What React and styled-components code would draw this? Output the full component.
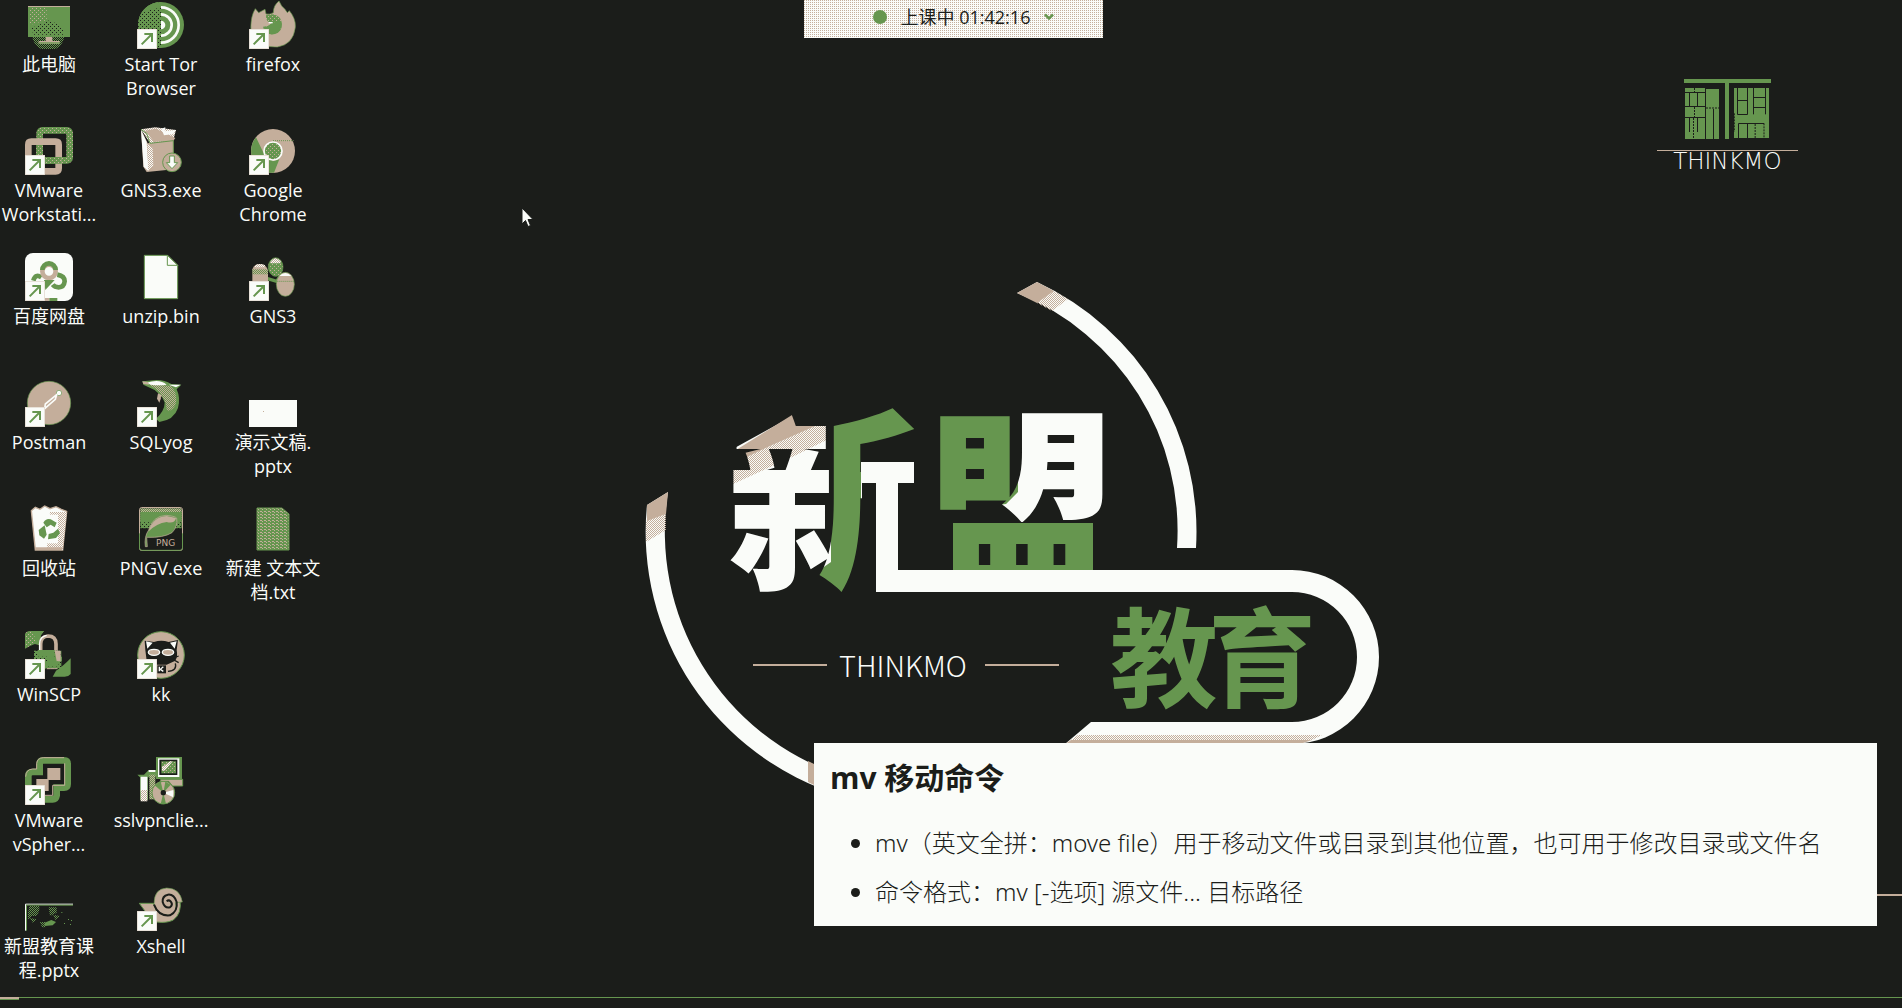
import React from "react";
import styled, { createGlobalStyle } from "styled-components";

const C = {
  ink: "#1b1d1a",
  green: "#66964f",
  tan: "#c4ae9b",
  paper: "#fafcf9",
};

const ui = `"Open Sans", "Noto Sans CJK SC", sans-serif`;
const prose = `"Noto Sans", "Noto Sans CJK SC", sans-serif`;

const GlobalStyle = createGlobalStyle`
  *, *::before, *::after { box-sizing: border-box; }
  body { margin: 0; background: ${C.ink}; color: ${C.paper}; font-family: ${ui}; }
`;

const Desktop = styled.main`
  position: relative;
  height: 100vh;
  min-height: 640px;
  overflow: hidden;
  background: ${C.ink};
`;

const IconGrid = styled.nav`
  position: relative;
  display: grid;
  height: 100%;
  width: max-content;
  grid-auto-flow: column;
  grid-template-rows: repeat(auto-fill, 126px);
  grid-auto-columns: 98px;
  column-gap: 14px;
`;

const Shortcut = styled.button`
  display: flex;
  flex-direction: column;
  align-items: center;
  gap: 3px;
  padding: 1px 0 0;
  border: 0;
  background: none;
  color: ${C.paper};
  font-family: ${ui};
  font-size: 18px;
  line-height: 24px;
  cursor: default;
`;

const Label = styled.span`
  white-space: pre;
  text-align: center;
`;

const Glyph = styled.svg`
  display: block;
  flex: none;
  width: 48px;
  height: 48px;
`;

const Emblem = styled.svg`
  position: absolute;
  left: calc(50% - 311px);
  top: calc(50% - 234px);
  width: 752px;
  height: 540px;
`;

const Brand = styled.svg`
  position: absolute;
  right: 82px;
  top: 60px;
  width: 180px;
  height: 120px;
`;

const StatusBar = styled.button`
  position: absolute;
  top: 0;
  left: calc(50% - 147px);
  display: flex;
  align-items: center;
  justify-content: center;
  gap: 14px;
  width: 299px;
  height: 38px;
  padding: 0 0 4px 20px;
  border: 0;
  color: ${C.ink};
  background: conic-gradient(${C.paper} 0 75%, ${C.tan} 75% 100%) 0 0 / 2px 2px;
  font-family: ${ui};
  font-size: 18px;
  line-height: 24px;
`;

const Dot = styled.span`
  width: 14px;
  height: 14px;
  border-radius: 50%;
  background: ${C.green};
`;

const Note = styled.article`
  position: absolute;
  right: 25px;
  bottom: 82px;
  width: 1063px;
  max-width: calc(100% - 50px);
  padding: 15px 16px 10px;
  background: ${C.paper};
  color: ${C.ink};
`;

const NoteTitle = styled.h2`
  margin: 0;
  font-size: 30px;
  line-height: 40px;
  font-weight: 700;
`;

const NoteList = styled.ul`
  margin: 20px 0 0;
  padding-left: 45px;
  font-family: ${prose};
  font-size: 24px;
  line-height: 49px;
  font-weight: 300;
`;

const WallLine = styled.span`
  position: absolute;
  right: 0;
  bottom: 112px;
  width: 60px;
  height: 2px;
  background: ${C.tan};
`;

const Progress = styled.div`
  position: absolute;
  left: 0;
  right: 0;
  bottom: 8px;
  height: 3px;
  border-top: 1px solid ${C.green};
`;

const ProgressFill = styled.div`
  width: 1%;
  height: 3px;
  margin-top: -1px;
  border-bottom: 1px solid ${C.green};
  background: ${C.tan};
`;

const Pointer = styled.svg`
  position: absolute;
  left: 521px;
  top: 207px;
  width: 13px;
  height: 21px;
`;

const TileSheet = styled.svg`
  position: absolute;
  width: 0;
  height: 0;
`;

/* Shared dither tiles, 3 units to a screen pixel. */
const Tiles = () => (
  <TileSheet aria-hidden="true">
    <defs>
      <pattern id="tanOnGreen" width="12" height="12" patternUnits="userSpaceOnUse">
        <rect width="12" height="12" fill={C.green} />
        <path d="M0 0h3v3h-3zM6 6h3v3h-3z" fill={C.tan} />
      </pattern>
      <pattern id="inkOnGreen" width="12" height="12" patternUnits="userSpaceOnUse">
        <rect width="12" height="12" fill={C.green} />
        <path d="M0 0h3v3h-3zM6 6h3v3h-3z" fill={C.ink} />
      </pattern>
      <pattern id="greenInk" width="6" height="6" patternUnits="userSpaceOnUse">
        <path d="M0 0h3v3h-3zM3 3h3v3h-3z" fill={C.green} />
      </pattern>
      <pattern id="tanGreen" width="6" height="6" patternUnits="userSpaceOnUse">
        <rect width="6" height="6" fill={C.green} />
        <path d="M0 0h3v3h-3zM3 3h3v3h-3z" fill={C.tan} />
      </pattern>
      <pattern id="tanPaper" width="6" height="6" patternUnits="userSpaceOnUse">
        <rect width="6" height="6" fill={C.paper} />
        <path d="M0 0h3v3h-3zM3 3h3v3h-3z" fill={C.tan} />
      </pattern>
      <pattern id="textLines" width="12" height="9" patternUnits="userSpaceOnUse">
        <rect width="12" height="9" fill={C.green} />
        <path d="M0 0h6v3h-6zM6 3h3v3h-3z" fill={C.tan} />
      </pattern>
    </defs>
  </TileSheet>
);

const Badge = ({ x, y }) => (
  <g transform={`translate(${x} ${y + 84})`}>
    <rect width="60" height="60" fill={C.tan} />
    <rect x="2" y="2" width="56" height="56" fill={C.paper} />
    <path d="M1.500 1.500h57v57h-57z" fill="none" stroke={C.paper} strokeWidth="3" strokeDasharray="3 3" />
    <path d="M14 46L42 18M22 15h23v24" fill="none" stroke={C.green} strokeWidth="6" />
  </g>
);

const art = {
  pc: (
    <>
      <circle cx="145" cy="104" r="48" fill="url(#greenInk)" />
      <rect x="84" y="18" width="126" height="93" fill={C.green} />
      <path d="M87 24H140V60L87 76z" fill="url(#tanOnGreen)" />
      <path d="M95 84L150 60 190 84v20H100z" fill="url(#inkOnGreen)" />
      <path d="M84 19.500h126" stroke={C.tan} strokeWidth="3" />
      <path d="M137 111h20v12h22v9h-63v-9h21z" fill={C.tan} />
      <path d="M117 129h63" stroke={C.green} strokeWidth="4" />
    </>
  ),
  tor: (
    <>
      <circle cx="483" cy="75" r="69" fill={C.green} />
      <path d="M483 6a69 69 0 0 0 0 138z" fill="url(#inkOnGreen)" />
      <path d="M420 46Q440 8 483 6v18Q440 26 420 46z" fill={C.green} />
      <g fill="none" stroke={C.paper} strokeWidth="8">
        <path d="M483 22a53 53 0 0 1 0 106M483 43a32 32 0 0 1 0 64" />
      </g>
      <path d="M483 62a13 13 0 0 1 0 26z" fill={C.paper} />
    </>
  ),
  firefox: (
    <>
      <path d="M753 98Q750 50 766 26L776 38 795 28 798 42Q810 44 820 38 820 16 837 3 844 20 855 28L862 38 868 32Q888 56 886 82 880 134 832 141 770 144 753 98z" fill={C.tan} stroke={C.green} strokeWidth="2" />
      <path d="M798 46Q824 36 840 54 852 74 840 92 822 108 802 100 790 92 790 80 802 82 816 70 796 66 798 46z" fill="url(#tanOnGreen)" />
      <path d="M790 80Q806 82 816 68L842 62Q850 82 834 98 812 110 796 94z" fill={C.green} />
      <path d="M806 66h12v4h-12z" fill={C.paper} />
    </>
  ),
  vmware: (
    <>
      <rect x="119" y="391" width="90" height="90" rx="8" fill="none" stroke="url(#tanOnGreen)" strokeWidth="20" />
      <path d="M85 434q0-9 9-9h73q9 0 9 9v71q0 9-9 9H94q-9 0-9-9z" fill="none" stroke={C.tan} strokeWidth="20" />
      <path d="M119 436v45h66" fill="none" stroke="url(#tanOnGreen)" strokeWidth="20" />
      <path d="M162 438v28h-28" fill="none" stroke={C.ink} strokeWidth="2" />
    </>
  ),
  gnsexe: (
    <>
      <path d="M423 388L443 430 520 420 522 508 440 516 430 500z" fill={C.tan} />
      <path d="M423 390L440 426 446 514 431 500z" fill={C.paper} />
      <path d="M423 388L466 382 528 390 520 420 450 430z" fill="url(#tanPaper)" />
      <path d="M436 392L468 386 526 414 520 422 462 426z" fill={C.tan} />
      <path d="M484 386l12-4-2 12 34-4-8 12-28 4z" fill={C.paper} />
      <path d="M442 432L458 444 460 498 444 512z" fill="url(#tanPaper)" />
      <path d="M423 388L440 400 450 430 520 422v40" fill="none" stroke={C.green} strokeWidth="3" />
      <circle cx="516" cy="487" r="28" fill={C.tan} stroke={C.green} strokeWidth="3" />
      <path d="M509 468h14v20h10l-17 18-17-18h10z" fill={C.paper} stroke={C.green} strokeWidth="3" />
    </>
  ),
  chrome: (
    <>
      <circle cx="819" cy="453" r="66" fill={C.tan} />
      <path d="M768 412A66 66 0 0 0 806 518L819 482 794 466z" fill={C.green} />
      <path d="M810 486L838 478 822 518H806z" fill={C.green} />
      <path d="M819 422h62" stroke={C.green} strokeWidth="3" strokeDasharray="3 3" />
      <circle cx="819" cy="453" r="27" fill="url(#tanOnGreen)" stroke={C.paper} strokeWidth="5" />
    </>
  ),
  baidu: (
    <>
      <rect x="75" y="39" width="144" height="144" rx="24" fill={C.paper} />
      <g fill="none" strokeWidth="14">
        <path d="M124 112Q106 100 100 122" stroke={C.green} />
        <circle cx="147" cy="94" r="20" stroke={C.tan} />
        <path d="M127 90a20 20 0 0 1 40 0" stroke={C.green} />
        <path d="M172 104Q194 108 194 124 192 142 176 142 164 142 158 134" stroke={C.green} />
      </g>
      <path d="M132 120h32l-28 30z" fill={C.green} />
      <path d="M130 174h18v9h-18z" fill={C.tan} />
      <path d="M148 174h24v9h-24z" fill={C.green} />
    </>
  ),
  file: (
    <g fill={C.paper} stroke={C.green} strokeWidth="3">
      <path d="M433 46h70l30 30v100H433z" />
      <path d="M502 46v30h31z" />
    </g>
  ),
  gns: (
    <>
      <path d="M790 112L830 124 846 100" fill="none" stroke={C.green} strokeWidth="10" />
      <path d="M757 88Q762 72 781 72 800 74 804 92V124H757z" fill={C.tan} />
      <path d="M757 88h47v15h-47z" fill="url(#greenInk)" />
      <path d="M765 76q16-8 30 0v6h-30z" fill="url(#tanPaper)" />
      <ellipse cx="827" cy="81" rx="22" ry="28" fill="url(#tanOnGreen)" stroke={C.green} strokeWidth="2" />
      <path d="M812 64q14-18 30 0v6h-30z" fill="url(#tanPaper)" />
      <ellipse cx="856" cy="133" rx="27" ry="36" fill={C.tan} stroke={C.green} strokeWidth="2" />
      <path d="M838 108q18-18 36 0z" fill={C.paper} />
      <path d="M830 124h52" stroke={C.green} strokeWidth="3" strokeDasharray="3 3" />
    </>
  ),
  postman: (
    <>
      <circle cx="147" cy="489" r="65" fill={C.tan} stroke={C.green} strokeWidth="2" />
      <circle cx="177" cy="459" r="8" fill={C.paper} stroke={C.green} strokeWidth="2" />
      <path d="M170 464L136 492 134 506 166 478z" fill={C.tan} stroke={C.paper} strokeWidth="5" />
      <path d="M136 504l-10 10" stroke={C.paper} strokeWidth="4" />
    </>
  ),
  dolphin: (
    <>
      <path d="M427 424L470 420Q494 420 514 432L544 434 530 448Q542 474 534 504 522 540 478 546L468 536Q494 512 494 488 488 470 464 450L430 434z" fill={C.green} />
      <path d="M446 432L512 438Q536 460 526 496 510 520 500 508 500 474 466 446z" fill="url(#tanGreen)" />
      <path d="M440 428Q480 416 500 434 480 438 452 434zM506 434l36 0-14 8z" fill={C.paper} />
      <path d="M427 424l16 2 4 8-17-2z" fill={C.tan} />
      <path d="M474 460l12 6-8 22-7-12z" fill={C.tan} />
      <path d="M484 470q10 24-6 40" fill="none" stroke={C.ink} strokeWidth="4" />
    </>
  ),
  slide: (
    <>
      <rect x="747" y="480" width="144" height="81" fill={C.paper} />
      <rect x="789" y="513" width="3" height="3" fill={C.tan} />
    </>
  ),
  bin: (
    <>
      <path d="M94 62L106 52 120 58 134 48 150 56 168 50 184 58 200 64 188 180H106z" fill={C.paper} stroke={C.tan} strokeWidth="4" />
      <path d="M150 66L200 66 188 180H140z" fill="url(#tanPaper)" />
      <path d="M134 74h40v86h-40z" fill={C.paper} />
      <path d="M106 172h82l-2 8h-78z" fill={C.tan} />
      <g fill={C.green}>
        <path d="M130 98Q138 84 152 88L170 98 164 112 152 104 140 112z" />
        <path d="M134 106L140 134 132 146 118 136 116 120z" />
        <path d="M174 116l6 14-12 14-24 4 2-16 14-4z" />
      </g>
    </>
  ),
  png: (
    <>
      <rect x="418.500" y="52.500" width="129" height="129" rx="7" fill={C.ink} stroke={C.tan} strokeWidth="3" />
      <path d="M421 55h124v42H421z" fill="url(#tanGreen)" />
      <path d="M421 66h124v34H421z" fill={C.green} />
      <path d="M421 97h124v18H421z" fill="url(#inkOnGreen)" />
      <path d="M436 170Q432 140 446 120 458 78 498 76 524 78 530 84 534 110 516 128 490 144 440 142L442 170z" fill={C.green} stroke={C.tan} strokeWidth="2" />
      <path d="M446 124Q458 80 500 78L528 84Q524 102 500 96 470 100 446 124z" fill={C.tan} />
      <path d="M418.500 130v44q0 7 7 7h115q7 0 7-7v-44" fill="none" stroke={C.green} strokeWidth="3" />
      <text x="468" y="167" fontSize="27" fontFamily="DejaVu Sans, sans-serif" fill={C.tan}>PNG</text>
    </>
  ),
  txt: (
    <path d="M771 54h75l21 18v108h-96z" fill="url(#textLines)" stroke={C.green} strokeWidth="3" />
  ),
  winscp: (
    <>
      <path d="M75 432Q78 424 90 423H132L122 436V466L104 462 90 468 75 476z" fill="url(#tanOnGreen)" />
      <path d="M100 423h32l-10 14v28l-14-3z" fill={C.green} />
      <path d="M122 484V462Q122 440 144 438 168 438 168 462V500" fill="none" stroke={C.tan} strokeWidth="11" />
      <path d="M119 480V460Q120 440 140 436" fill="none" stroke={C.paper} strokeWidth="4" />
      <path d="M102 482h82v54h-82z" fill="url(#inkOnGreen)" />
      <path d="M114 480h50v20h-50zM144 500h42v14h-42z" fill={C.green} />
      <path d="M164 482h18v32h-12z" fill={C.tan} />
      <path d="M136 514h40v16h-40z" fill="url(#greenInk)" />
      <path d="M140 536h32" stroke={C.tan} strokeWidth="3" />
      <path d="M212 505L212 552Q206 560 194 560H158L168 542Q188 530 212 505z" fill={C.green} />
    </>
  ),
  kk: (
    <>
      <circle cx="483" cy="495" r="70" fill={C.tan} stroke={C.green} strokeWidth="3" />
      <path d="M434 452L462 456Q484 448 506 456L534 450 530 480Q534 500 526 512L500 524H462L440 512 436 480z" fill={C.ink} />
      <path d="M438 454l20 4-16 18zM530 454l-20 4 14 18z" fill={C.paper} />
      <ellipse cx="462" cy="487" rx="17" ry="9" fill={C.tan} stroke={C.paper} strokeWidth="4" />
      <ellipse cx="504" cy="487" rx="17" ry="9" fill={C.tan} stroke={C.paper} strokeWidth="4" />
      <path d="M520 504l16-6M522 510l14 8M526 520q6 22-22 24" fill="none" stroke={C.ink} strokeWidth="4" />
      <path d="M472 526h26v24h-26z" fill={C.ink} />
      <path d="M478 530v14M490 530l-9 8 9 6" fill="none" stroke={C.paper} strokeWidth="4" />
    </>
  ),
  vsphere: (
    <>
      <path d="M119 96V72Q119 61 130 61H192Q203 61 203 72V132Q203 143 192 143H170V166Q168 178 158 178H96Q85 178 85 168V108Q85 96 98 96z" fill={C.ink} stroke={C.green} strokeWidth="20" />
      <path d="M77 110Q78 88 98 87H110V70Q112 54 130 53H192M194 70V136H158V166H134" fill="none" stroke={C.tan} strokeWidth="3" />
      <path d="M142 84h39v36h-39zM109 117h37v36h-37z" fill={C.tan} />
    </>
  ),
  setup: (
    <>
      <path d="M412 104L432 104 446 90H468V110L444 112V180H420V112z" fill={C.green} />
      <path d="M422 110h20v44h-20zM446 90h20v6h-20z" fill={C.paper} />
      <path d="M422 150h20v34h-20z" fill="url(#tanPaper)" />
      <path d="M448 104h18v74h-18z" fill="url(#tanGreen)" />
      <circle cx="490" cy="158" r="34" fill={C.tan} stroke={C.green} strokeWidth="3" />
      <path d="M490 158L464 136 482 124zM490 158l-8 35 16-2zM490 158l22-24-16-9z" fill={C.green} />
      <path d="M490 158l30-8v22z" fill={C.paper} />
      <circle cx="490" cy="158" r="8" fill={C.ink} />
      <path d="M468 51h78v66h-78z" fill={C.green} />
      <path d="M474 55h64v56h-64z" fill={C.paper} />
      <path d="M478 59h54v46h-54z" fill={C.ink} />
      <path d="M484 64h44v36h-44z" fill="url(#tanOnGreen)" />
      <path d="M486 82l24-18h8l-24 28h-8z" fill="url(#tanPaper)" />
      <path d="M482 118h66v20h-30l-12-14h-24z" fill={C.tan} stroke={C.green} strokeWidth="3" />
    </>
  ),
  course: (
    <>
      <path d="M76.500 572V492.500H219" fill="none" stroke={C.paper} strokeWidth="3" />
      <path d="M79.500 572V495.500H219" fill="none" stroke={C.green} strokeWidth="3" />
      <path d="M88 498h30v14l-8 16h-14l-12 10v-20z" fill="url(#greenInk)" />
      <path d="M146 502h24v16l-20 10zM90 534l20 4-12 10zM120 546h16v16h-10zM160 524l20 4-14 12z" fill="url(#greenInk)" />
      <path d="M134 548l20-8 14 6-10 10-24 2z" fill={C.green} />
      <path d="M184 516h3v3h-3zM204 537h3v3h-3zM213 540h3v3h-3zM192 549h3v3h-3zM210 552h3v3h-3z" fill={C.green} />
    </>
  ),
  xshell: (
    <>
      <path d="M418 490H460L470 514 540 480Q546 520 520 540 500 550 470 546L440 520z" fill={C.tan} stroke={C.green} strokeWidth="3" />
      <path d="M462 492Q462 446 500 444 540 444 547 486L526 488Q536 520 506 526 470 524 462 492z" fill={C.tan} stroke={C.green} strokeWidth="2" />
      <path d="M462 494Q476 530 510 526 534 514 530 486 522 462 504 464 486 468 488 486 494 506 510 502 520 494 512 484 506 478 500 484" fill="none" stroke={C.ink} strokeWidth="6" />
    </>
  ),
};

const COL = [75, 411, 747];
const ROW = [3, 381, 39, 417, 45, 423, 51, 429];

const shortcuts = [
  ["pc", "此电脑", 0, 0, false],
  ["vmware", "VMware\nWorkstati...", 0, 1, true],
  ["baidu", "百度网盘", 0, 2, true],
  ["postman", "Postman", 0, 3, true],
  ["bin", "回收站", 0, 4, false],
  ["winscp", "WinSCP", 0, 5, true],
  ["vsphere", "VMware\nvSpher...", 0, 6, true],
  ["course", "新盟教育课\n程.pptx", 0, 7, false],
  ["tor", "Start Tor\nBrowser", 1, 0, true],
  ["gnsexe", "GNS3.exe", 1, 1, false],
  ["file", "unzip.bin", 1, 2, false],
  ["dolphin", "SQLyog", 1, 3, true],
  ["png", "PNGV.exe", 1, 4, false],
  ["kk", "kk", 1, 5, true],
  ["setup", "sslvpnclie...", 1, 6, false],
  ["xshell", "Xshell", 1, 7, true],
  ["firefox", "firefox", 2, 0, true],
  ["chrome", "Google\nChrome", 2, 1, true],
  ["gns", "GNS3", 2, 2, true],
  ["slide", "演示文稿.\npptx", 2, 3, false],
  ["txt", "新建 文本文\n档.txt", 2, 4, false],
];

const DesktopIcon = ({ item: [name, label, col, row, linked] }) => (
  <Shortcut type="button">
    <Glyph viewBox={`${COL[col]} ${ROW[row]} 144 144`} aria-hidden="true">
      {art[name]}
      {linked && <Badge x={COL[col]} y={ROW[row]} />}
    </Glyph>
    <Label>{label}</Label>
  </Shortcut>
);

const WallpaperEmblem = () => (
  <Emblem viewBox="640 270 752 540">
    <defs>
      <pattern id="speckle" width="2" height="2" patternUnits="userSpaceOnUse">
        <path d="M0 0h1v1h-1zM1 1h1v1h-1z" fill={C.tan} />
      </pattern>
      <pattern id="nameTint" x="640" y="270" width="752" height="540" patternUnits="userSpaceOnUse">
        <path d="M80 330V186L160 142H222V330z" fill={C.paper} />
        <path d="M220 192H274V213H258V322H236V213H220z" fill={C.paper} />
        <path d="M80 190L160 140H180V154L130 176 80 200z" fill={C.tan} />
        <path d="M80 220V200L130 176 180 154 215 140V156L150 188z" fill="url(#speckle)" />
        <path d="M191 130H280V191H221V330H168V308L191 292z" fill={C.green} />
        <path d="M300 130H470V252H300z" fill={C.paper} />
        <path d="M300 130H378V222L366 234 350 236V242H300z" fill={C.green} />
        <path d="M313 253H453V301H313z" fill={C.green} />
      </pattern>
    </defs>
    <path d="M1017 293L1037 282A275 275 0 0 1 1196 548H1177A256 256 0 0 0 1017 293z" fill={C.paper} />
    <path d="M1017 293L1037 282 1054 291 1037 303z" fill={C.tan} />
    <path d="M1054 291L1068 299 1052 311 1037 303z" fill="url(#speckle)" />
    <path d="M668 492L647 505A275 275 0 0 0 840 795V775A256 256 0 0 1 668 492z" fill={C.paper} />
    <path d="M668 492L647 505V521L666 514z" fill={C.tan} />
    <path d="M646 521L666 514V530L646 542z" fill="url(#speckle)" />
    <path d="M808 761l6 3v21l-6-3z" fill={C.tan} />
    <text y="575" fontSize="196" fontWeight="900" fontFamily="Noto Sans CJK SC, sans-serif" fill="url(#nameTint)">
      <tspan x="727">新</tspan>
      <tspan x="924">盟</tspan>
    </text>
    <path d="M861 462H914V483H898V570H1292A87 87 0 0 1 1292 744H1065L1091 722H1292A65 65 0 0 0 1292 592H876V483H861z" fill={C.paper} />
    <path d="M1071 740H1312L1300 744H1065z" fill={C.tan} />
    <path d="M1078 735H1322L1312 740H1071z" fill="url(#speckle)" />
    <text y="699" fontSize="108" fontWeight="700" fontFamily="Noto Sans CJK SC, sans-serif" fill={C.green}>
      <tspan x="1110">教</tspan>
      <tspan x="1208">育</tspan>
    </text>
    <path d="M753 665H827M985 665H1059" stroke={C.tan} strokeWidth="2" />
    <text x="903" y="677" textAnchor="middle" fontSize="29" fontWeight="300" fontFamily="Noto Sans CJK SC, sans-serif" fill={C.paper}>THINKMO</text>
  </Emblem>
);

const CornerBrand = () => (
  <Brand viewBox="0 0 540 360">
    <path d="M132 57H393V69H267V237H255V69H132zM135 84H195V237H135zM198 87H237V237H198zM282 84H387V234H282z" fill={C.green} />
    <g fill="none" stroke={C.ink} strokeWidth="3">
      <path d="M135 97.500H195M135 139.500H195M135 172.500H195M148.500 99V138M172.500 99V138M148.500 174V216M172.500 174V216M220.500 147V237" />
      <path d="M163.500 84V96M163.500 141V171M160.500 174V237M198 144H237" strokeDasharray="6 3" />
      <path d="M292.500 84V163.500H322.500V84M294 121.500H322M340.500 84V163M376.500 84V163M341 112.500H376M341 142.500H376" />
      <path d="M295.500 234V190.500H372M322.500 192V234" />
      <path d="M345.500 192V234M372 190V234M283 160V215" strokeDasharray="6 3" />
    </g>
    <path d="M324 84H339V165H324z" fill={C.green} />
    <path d="M51 271.500H474" stroke={C.tan} strokeWidth="3" />
    <text x="262" y="326" textAnchor="middle" fontSize="69" fontWeight="200" fontFamily="DejaVu Sans, sans-serif" fill={C.paper}>THINKMO</text>
  </Brand>
);

export default function App() {
  return (
    <>
      <GlobalStyle />
      <Tiles />
      <Desktop>
        <WallpaperEmblem />
        <CornerBrand />
        <WallLine />
        <IconGrid aria-label="Desktop">
          {shortcuts.map((item) => (
            <DesktopIcon key={item[0]} item={item} />
          ))}
        </IconGrid>
        <StatusBar type="button">
          <Dot />
          <span>上课中 01:42:16</span>
          <svg width="10" height="8" viewBox="0 0 10 8" aria-hidden="true">
            <path d="M1 1.500L5 5.500 9 1.500" fill="none" stroke={C.green} strokeWidth="2.500" />
          </svg>
        </StatusBar>
        <Note>
          <NoteTitle>mv 移动命令</NoteTitle>
          <NoteList>
            <li>mv（英文全拼：move file）用于移动文件或目录到其他位置，也可用于修改目录或文件名</li>
            <li>命令格式：mv [-选项] 源文件... 目标路径</li>
          </NoteList>
        </Note>
        <Progress>
          <ProgressFill />
        </Progress>
        <Pointer viewBox="0 0 13 21" aria-hidden="true">
          <path d="M1 1V17L4.500 13.500 7 19.500 9.500 18.500 7 12.500H12z" fill={C.paper} stroke={C.ink} />
        </Pointer>
      </Desktop>
    </>
  );
}
